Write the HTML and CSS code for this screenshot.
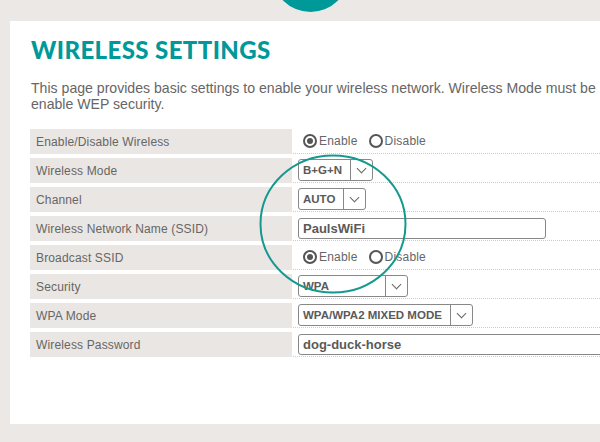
FILE: index.html
```html
<!DOCTYPE html>
<html lang="en">
<head>
    <meta charset="UTF-8">
    <meta name="viewport" content="width=device-width, initial-scale=1.0">
    <title>Wireless Settings</title>
    <link rel="stylesheet" href="styles.css">
</head>
<body>
    <div class="top-bar">
        <span class="logo-dot"></span>
    </div>
    <div class="panel">
        <h1 class="title">WIRELESS SETTINGS</h1>
        <p class="intro">This page provides basic settings to enable your wireless network. Wireless Mode must be<br>enable WEP security.</p>

        <div class="settings">
            <div class="label">Enable/Disable Wireless</div>
            <div class="value">
                <span class="radio"><span class="dot checked"></span>Enable</span>
                <span class="radio"><span class="dot"></span>Disable</span>
            </div>

            <div class="label">Wireless Mode</div>
            <div class="value">
                <span class="select"><span class="select-text">B+G+N</span><span class="select-arrow"></span></span>
            </div>

            <div class="label">Channel</div>
            <div class="value">
                <span class="select"><span class="select-text">AUTO</span><span class="select-arrow"></span></span>
            </div>

            <div class="label">Wireless Network Name (SSID)</div>
            <div class="value">
                <span class="text-input ssid">PaulsWiFi</span>
            </div>

            <div class="label">Broadcast SSID</div>
            <div class="value">
                <span class="radio"><span class="dot checked"></span>Enable</span>
                <span class="radio"><span class="dot"></span>Disable</span>
            </div>

            <div class="label">Security</div>
            <div class="value">
                <span class="select"><span class="select-text security">WPA</span><span class="select-arrow"></span></span>
            </div>

            <div class="label">WPA Mode</div>
            <div class="value">
                <span class="select"><span class="select-text">WPA/WPA2 MIXED MODE</span><span class="select-arrow"></span></span>
            </div>

            <div class="label">Wireless Password</div>
            <div class="value">
                <span class="text-input password">dog-duck-horse</span>
            </div>
        </div>

        <!-- hand-drawn highlight over the form -->
        <svg class="callout" width="150" height="142" viewBox="0 0 150 142">
            <ellipse cx="75" cy="71" rx="72.5" ry="68.5" fill="none" stroke="#15998f" stroke-width="2"/>
        </svg>
    </div>
</body>
</html>
```

FILE: styles.css
```css
body {
    margin: 0;
    padding: 0;
    background-color: #ebe8e5;
    overflow: hidden;
    font-family: "Liberation Sans", Arial, sans-serif;
    color: #666;
}
.top-bar {
    position: relative;
    height: 21px;
}
.logo-dot {
    position: absolute;
    left: 272px;
    top: -65px;
    width: 77px;
    height: 77px;
    border-radius: 50%;
    background-color: #00999a;
}
.panel {
    position: relative;
    margin-left: 10px;
    width: 720px;
    height: 403px;
    padding: 17px 0 0 21px;
    box-sizing: border-box;
    background-color: #fff;
}
.title {
    margin: 0;
    font-family: Lato, sans-serif;
    font-weight: 900;
    font-size: 24px;
    line-height: 24px;
    letter-spacing: 0.4px;
    color: #00999a;
}
.intro {
    margin: 18px 0 17px 0;
    font-size: 14.1px;
    line-height: 16px;
    white-space: nowrap;
}
.settings {
    display: grid;
    grid-template-columns: 262px 1fr;
    column-gap: 1px;
    row-gap: 4px;
    margin-left: -1px;
}
.label {
    height: 25px;
    padding-left: 6px;
    display: flex;
    align-items: center;
    background-color: #eae6e3;
    font-size: 12px;
    letter-spacing: 0.15px;
}
.value {
    height: 25px;
    box-sizing: border-box;
    padding-left: 5px;
    display: flex;
    align-items: center;
    border-bottom: 1px dotted #ccc;
    font-size: 12px;
}
.radio {
    display: flex;
    align-items: center;
    margin-left: 5px;
    margin-right: 6px;
    letter-spacing: 0.2px;
}
.dot {
    width: 14px;
    height: 14px;
    box-sizing: border-box;
    border: 2px solid #555;
    border-radius: 50%;
    margin-right: 2px;
    display: flex;
    align-items: center;
    justify-content: center;
}
.dot.checked::after {
    content: "";
    width: 6px;
    height: 6px;
    border-radius: 50%;
    background-color: #555;
}
.select {
    display: flex;
    height: 22px;
    box-sizing: border-box;
    border: 1px solid #888;
    border-radius: 3px;
    font-size: 11.5px;
    font-weight: bold;
    color: #5a5a5a;
}
.select-text {
    display: flex;
    align-items: center;
    padding: 0 8px 0 4px;
    border-right: 1px solid #888;
}
.select-text.security {
    width: 74px;
}
.select-arrow {
    width: 21px;
    position: relative;
}
.select-arrow::after {
    content: "";
    position: absolute;
    left: 7px;
    top: 5px;
    width: 6px;
    height: 6px;
    border-right: 1px solid #666;
    border-bottom: 1px solid #666;
    transform: rotate(45deg);
}
.text-input {
    height: 21px;
    box-sizing: border-box;
    border: 1px solid #888;
    border-radius: 3px;
    padding-left: 4px;
    display: flex;
    align-items: center;
    font-size: 13px;
    font-weight: bold;
    color: #5a5a5a;
}
.ssid {
    width: 248px;
}
.password {
    width: 320px;
}
.callout {
    position: absolute;
    left: 248px;
    top: 132px;
}
```
